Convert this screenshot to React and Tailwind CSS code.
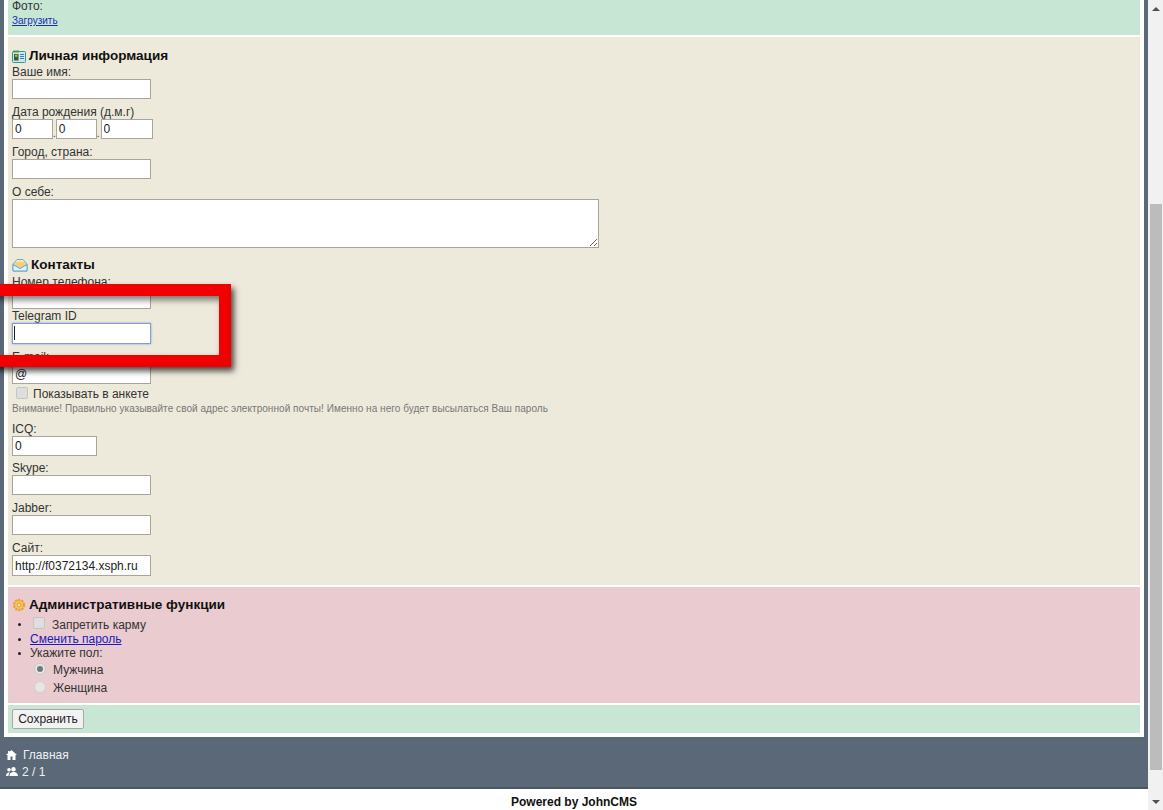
const inputClass =
  "block border bg-white px-[2px] text-[12px] leading-[18px] text-[#222] outline-none";

const CardIcon = () => (
  <svg width="14" height="13" viewBox="0 0 14 13" className="shrink-0">
    <rect x="0.5" y="1.500" width="13" height="11" rx="1" fill="#cfe6ef" stroke="#2f9a8f" />
    <rect x="1" y="0.500" width="6" height="2" rx="0.500" fill="#38a050" />
    <rect x="2" y="4" width="4.500" height="6.500" fill="#2f5f3a" />
    <circle cx="4.200" cy="5.800" r="1.300" fill="#e8a83c" />
    <path d="M8 4.500h4M8 6.500h4M8 8.500h4" stroke="#3a7fc0" strokeWidth="1" />
  </svg>
);

const MailIcon = () => (
  <svg width="16" height="14" viewBox="0 0 16 14" className="shrink-0">
    <path d="M1 6 5 1.500h6L15 6v7H1z" fill="#fbe7a8" stroke="#6aaed6" />
    <path d="M3 4h10l1 3-6 3-6-3z" fill="#f7cf7a" />
    <path d="M1 6.500 8 10.500l7-4V13H1z" fill="#e4f1f8" stroke="#5aa2d0" />
  </svg>
);

const GearIcon = () => (
  <svg width="14" height="14" viewBox="0 0 14 14" className="shrink-0">
    <circle cx="7" cy="7" r="5.200" fill="#f2b84a" stroke="#e9a02e" strokeWidth="2" strokeDasharray="2 1.300" />
    <circle cx="7" cy="7" r="3.700" fill="#f6c45f" />
    <circle cx="7" cy="7" r="1.800" fill="#fbeac2" stroke="#d88a1f" strokeWidth="0.700" />
  </svg>
);

const HomeIcon = () => (
  <svg width="11" height="10" viewBox="0 0 11 10" className="shrink-0">
    <path d="M5.500 0 11 5H9.500v5H6.500V6.500h-2V10H1.500V5H0L2 3.200V1h1.500v.8z" fill="#fff" />
  </svg>
);

const UsersIcon = () => (
  <svg width="12" height="9" viewBox="0 0 12 9" className="shrink-0">
    <circle cx="7.500" cy="2.200" r="2.200" fill="#fff" />
    <path d="M3.500 9c0-2.500 1.500-4 4-4s4.500 1.500 4.500 4z" fill="#fff" />
    <circle cx="3" cy="2.800" r="1.800" fill="#fff" />
    <path d="M0 9c0-2.200 1-3.500 3-3.500.4 0 .7 0 1 .1C3 6.400 2.500 7.500 2.500 9z" fill="#fff" />
  </svg>
);

const Heading = ({ icon, children }) => (
  <div className="flex h-[16px] items-center gap-[3px] text-[13.5px] font-bold leading-[16px] text-[#111]">
    {icon}
    <span>{children}</span>
  </div>
);

const Field = ({ label, value, width = "w-[139px]", height = "h-[20px]", top = "pt-[6px]", focus }) => (
  <div className={top}>
    <div className="h-[14px] leading-[14px]">{label}</div>
    <div className={`relative ${width} ${height}`}>
      <input
        readOnly
        value={value || ""}
        className={`${inputClass} h-full w-full ${focus ? "border-[#7f9fd6] shadow-[0_0_2px_#7f9fd6]" : "border-[#a9a59a]"}`}
      />
      {/* caret of the focused input */}
      {focus && <span className="absolute left-[2px] top-[3px] h-[14px] w-px bg-[#222]" />}
    </div>
  </div>
);

const Box = ({ className, children }) => <div className={`mb-[2px] ${className}`}>{children}</div>;

const Bullet = () => <span className="h-[3px] w-[3px] shrink-0 rounded-full bg-[#222]" />;

const checkClass =
  "mb-[3px] block h-[12px] w-[12px] appearance-none rounded-[2px] border border-[#c4c4c4] bg-[#dedede]";

const App = () => {
  return (
    <div className="flex h-[810px] w-[1163px] overflow-hidden bg-white font-['Liberation_Sans',Arial,sans-serif] text-[12px] text-[#333]">
      <div className="flex w-[1148px] flex-col">
        {/* page frame */}
        <div className="border-x-[4px] border-x-[#5a6877]">
          <div className="border-b-[4px] border-l-[4px] border-r-[4px] border-white bg-white">
            <Box className="h-[35px] bg-[#c8e6d4] pl-[4px]">
              <div className="h-[13px] leading-[12px]">Фото:</div>
              <a href="#" className="block pt-[2px] text-[10px] leading-[12px] text-[#1a2fb0] underline">
                Загрузить
              </a>
            </Box>

            <Box className="h-[548px] bg-[#eeeadb] pl-[4px] pt-[11px]">
              <Heading icon={<CardIcon />}>Личная информация</Heading>
              <div className="h-[11px] pt-[1px] leading-[14px]">Ваше имя:</div>
              <input readOnly className={`${inputClass} mt-[4px] h-[20px] w-[139px] border-[#a9a59a]`} />
              <div className="pt-[6px]">
                <div className="h-[14px] leading-[14px]">Дата рождения (д.м.г)</div>
                <div className="flex items-end text-[10px]">
                  <input readOnly value="0" className={`${inputClass} h-[20px] w-[41px] border-[#a9a59a]`} />
                  <span className="leading-[10px]">.</span>
                  <input readOnly value="0" className={`${inputClass} h-[20px] w-[41px] border-[#a9a59a]`} />
                  <span className="pr-[1px] leading-[10px]">.</span>
                  <input readOnly value="0" className={`${inputClass} h-[20px] w-[52px] border-[#a9a59a]`} />
                </div>
              </div>
              <Field label="Город, страна:" />
              <div className="pt-[6px]">
                <div className="h-[14px] leading-[14px]">О себе:</div>
                <textarea readOnly className="block h-[49px] w-[587px] border border-[#a9a59a] bg-white outline-none" />
              </div>

              <div className="pt-[9px]">
                <Heading icon={<MailIcon />}>Контакты</Heading>
              </div>
              <Field label="Номер телефона:" top="pt-[2px]" />
              <Field label="Telegram ID" top="pt-0" height="h-[21px]" focus />
              <Field label="E-mail:" value="@" />
              <div className="mt-[2px] flex h-[16px] items-center pl-[4px]">
                <input type="checkbox" disabled className={checkClass} />
                <span className="pl-[5px]">Показывать в анкете</span>
              </div>
              <div className="h-[14px] text-[10px] leading-[14px] tracking-[0.05px] text-[#777]">
                Внимание! Правильно указывайте свой адрес электронной почты! Именно на него будет высылаться Ваш пароль
              </div>
              <Field label="ICQ:" value="0" width="w-[85px]" />
              <Field label="Skype:" top="pt-[5px]" />
              <Field label="Jabber:" />
              <Field label="Сайт:" value="http://f0372134.xsph.ru" height="h-[21px]" />
            </Box>

            <Box className="h-[116px] bg-[#e9cbd0] pl-[4px] pt-[10px]">
              <Heading icon={<GearIcon />}>Административные функции</Heading>
              <ul className="pl-[6px] pt-[4px] leading-[14px]">
                <li className="flex h-[15px] items-center">
                  <Bullet />
                  <input type="checkbox" disabled className={`${checkClass} ml-[12px]`} />
                  <span className="pl-[7px]">Запретить карму</span>
                </li>
                <li className="flex h-[14px] items-center">
                  <Bullet />
                  <a href="#" className="pl-[9px] text-[#1a1ac0] underline">Сменить пароль</a>
                </li>
                <li className="flex h-[14px] items-center">
                  <Bullet />
                  <span className="pl-[9px]">Укажите пол:</span>
                </li>
              </ul>
              <div className="flex h-[20px] items-center pl-[22px]">
                <span className="mb-[3px] flex h-[12px] w-[12px] items-center justify-center rounded-full border border-[#c9c9c9] bg-[#e6e6e6]">
                  <span className="h-[6px] w-[6px] rounded-full bg-[#777]" />
                </span>
                <span className="pl-[7px]">Мужчина</span>
              </div>
              <div className="flex h-[16px] items-center pl-[22px]">
                <span className="mb-[3px] h-[12px] w-[12px] rounded-full border border-[#cfcfcf] bg-[#e6e6e6]" />
                <span className="pl-[7px]">Женщина</span>
              </div>
            </Box>

            <div className="flex h-[28px] items-center bg-[#c8e6d4] pl-[4px]">
              <button className="h-[20px] w-[72px] rounded-[2px] border border-[#a9a9a9] bg-[#f2f2f2] text-[12px] text-[#222]">
                Сохранить
              </button>
            </div>
          </div>
        </div>

        {/* bottom bar */}
        <div className="h-[52px] border-b-[2px] border-b-[#4a5663] bg-[#5a6877] px-[6px] pt-[9px] text-[#eef1f4]">
          <div className="flex h-[17px] items-center gap-[6px] text-[12px]">
            <HomeIcon />
            <span>Главная</span>
          </div>
          <div className="flex h-[17px] items-center gap-[4px] text-[12px]">
            <UsersIcon />
            <span>2 / 1</span>
          </div>
        </div>

        <div className="flex-1 pt-[6px] text-center text-[12px] font-bold leading-[14px] text-[#111]">
          Powered by JohnCMS
        </div>
      </div>

      {/* scrollbar */}
      <div className="flex w-[15px] flex-col items-center bg-[#f1f1f1]">
        <div className="flex h-[17px] w-full items-center justify-center text-[#505050]">
          <svg width="8" height="4" viewBox="0 0 8 4"><path d="M0 4 4 0l4 4z" fill="currentColor" /></svg>
        </div>
        <div className="h-[187px]" />
        <div className="h-[566px] w-[12px] bg-[#bcbcbc]" />
        <div className="flex-1" />
        <div className="flex h-[17px] w-full items-center justify-center text-[#505050]">
          <svg width="8" height="4" viewBox="0 0 8 4"><path d="M0 0h8L4 4z" fill="currentColor" /></svg>
        </div>
      </div>

      {/* red annotation drawn over the screenshot */}
      <div className="absolute left-[-20px] top-[284px] h-[83px] w-[251px] border-[12px] border-[#f00000] shadow-[3px_4px_6px_rgba(0,0,0,0.7),inset_3px_4px_6px_rgba(0,0,0,0.5)]" />
    </div>
  );
};

export default App;
